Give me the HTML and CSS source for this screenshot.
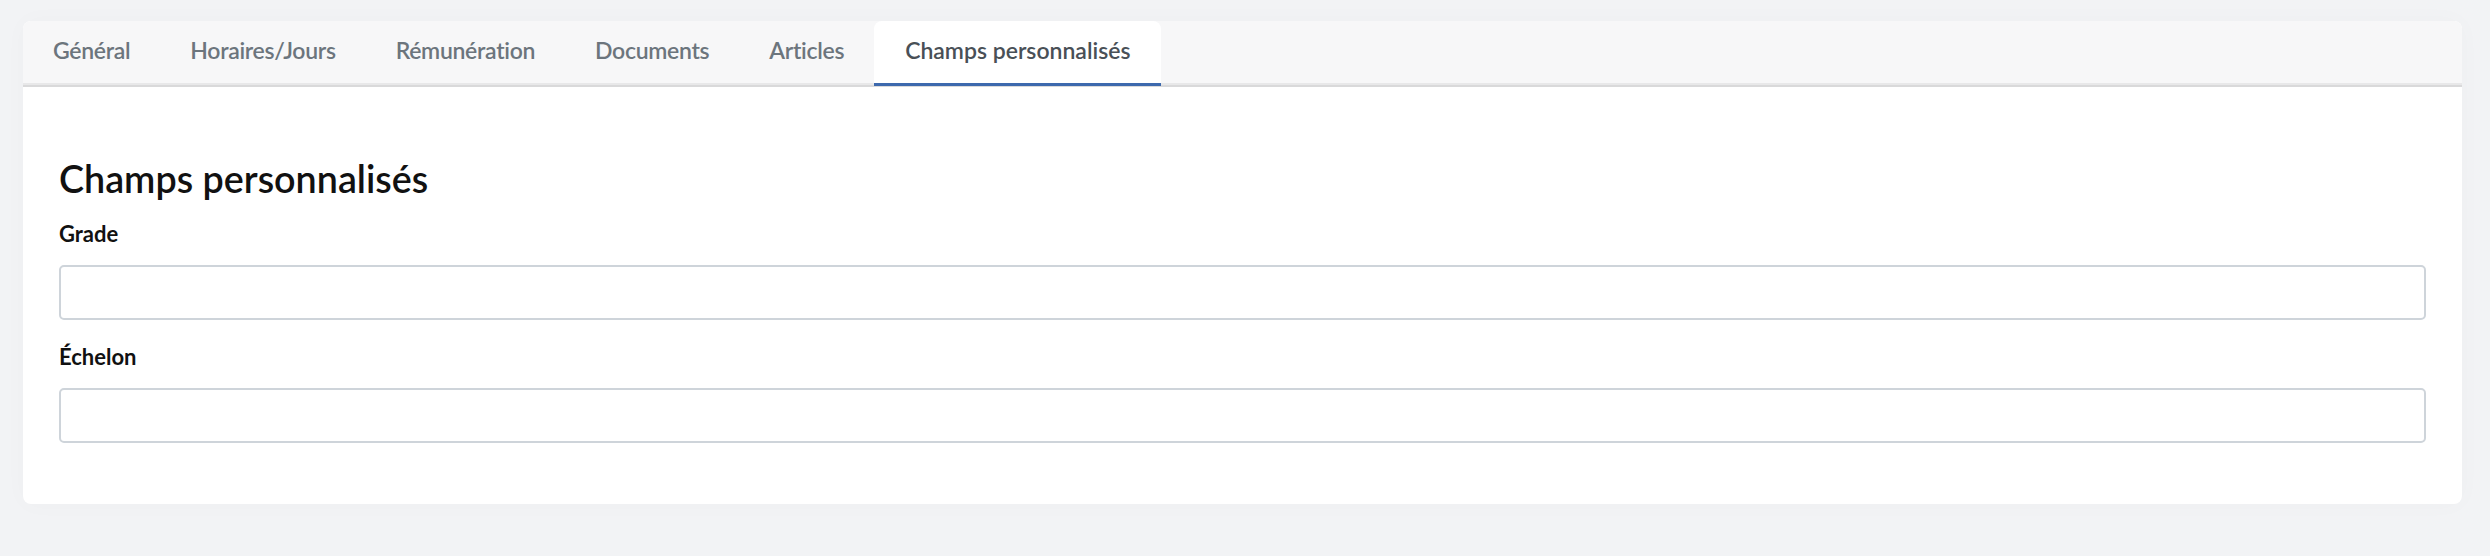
FILE: index.html
```html
<!DOCTYPE html>
<html lang="fr">
<head>
<meta charset="utf-8">
<title>Champs personnalisés</title>
<link rel="stylesheet" href="styles.css">
</head>
<body>
<div class="card">
  <nav class="tabs">
    <a class="tab">Général</a>
    <a class="tab">Horaires/Jours</a>
    <a class="tab">Rémunération</a>
    <a class="tab">Documents</a>
    <a class="tab">Articles</a>
    <a class="tab active">Champs personnalisés</a>
  </nav>
  <section class="panel">
    <h2 class="title">Champs personnalisés</h2>
    <div class="field">
      <label class="label" for="grade">Grade</label>
      <input class="input" id="grade" type="text">
    </div>
    <div class="field">
      <label class="label" for="echelon">Échelon</label>
      <input class="input" id="echelon" type="text">
    </div>
  </section>
</div>
</body>
</html>
```
FILE: styles.css
```css
html, body {
  margin: 0;
  padding: 0;
}
body {
  background: #f2f3f5;
  font-family: "Lato", "Liberation Sans", sans-serif;
  padding: 21px 28px 0 23px;
  height: 556px;
  box-sizing: border-box;
}
.card {
  background: #ffffff;
  border-radius: 8px;
  overflow: hidden;
  box-shadow: 0 0 24px rgba(0, 0, 0, 0.025);
}
.tabs {
  display: flex;
  height: 64px;
  background: #f7f7f8;
  border-bottom: 2px solid #d9d9da;
  box-shadow: inset 0 -2px 0 #e8e8e9;
}
.tab {
  display: block;
  height: 64px;
  line-height: 58px;
  padding: 0 30px;
  font-size: 23px;
  font-weight: 600;
  letter-spacing: -0.3px;
  color: #6c757d;
  white-space: nowrap;
  cursor: pointer;
  box-sizing: border-box;
}
.tab.active {
  height: 65px;
  padding: 0 31px;
  background: #ffffff;
  color: #495057;
  letter-spacing: 0;
  border-radius: 8px 8px 0 0;
  border-bottom: 3px solid #3d69ad;
}
.panel {
  padding: 36px 36px 61px;
}
.title {
  margin: 33px 0 20px;
  font-size: 37.7px;
  line-height: 45px;
  font-weight: 600;
  color: #111111;
}
.field + .field {
  margin-top: 24.5px;
}
.label {
  display: block;
  font-size: 22px;
  line-height: 26px;
  font-weight: 700;
  color: #111111;
  margin-bottom: 17.5px;
}
.input {
  display: block;
  width: 100%;
  height: 55px;
  box-sizing: border-box;
  border: 2px solid #ced4da;
  border-radius: 5px;
  background: #ffffff;
  font-family: inherit;
  font-size: 22px;
  padding: 0 16px;
  margin: 0;
  outline: none;
}
```
